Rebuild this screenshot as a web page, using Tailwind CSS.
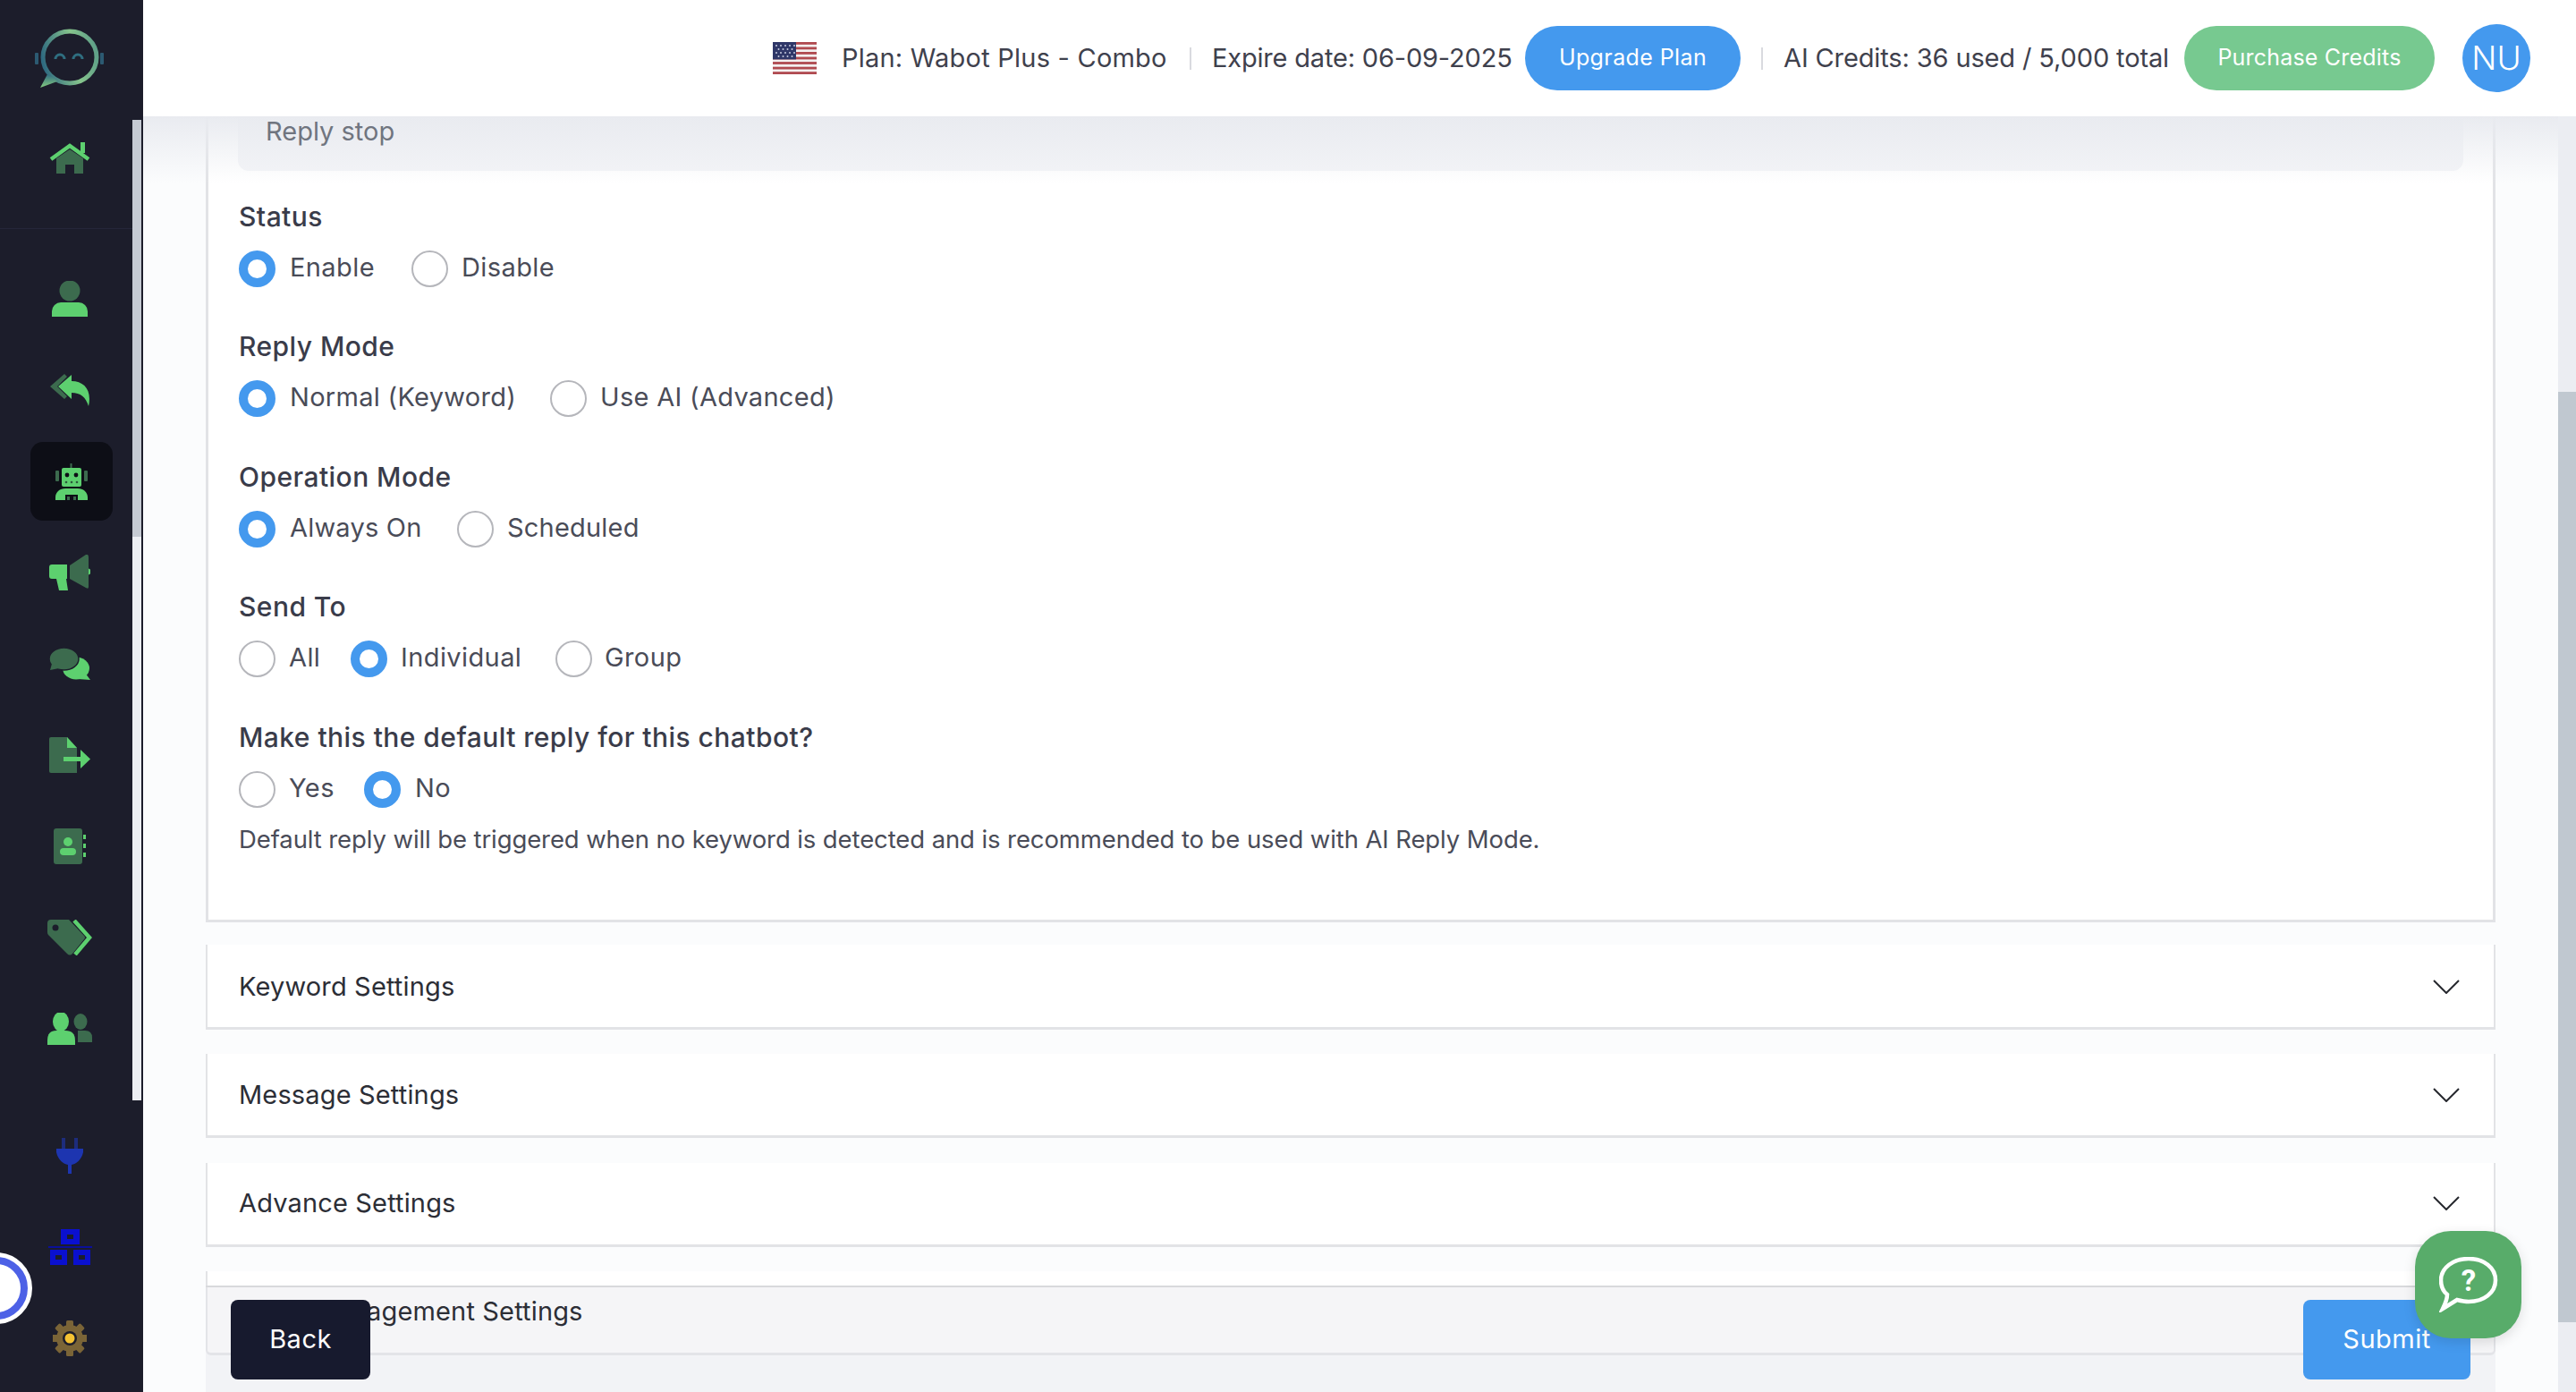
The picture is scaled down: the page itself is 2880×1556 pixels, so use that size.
<!DOCTYPE html>
<html lang="en">
<head>
  <meta charset="UTF-8">
  <title>Wabot - Reply</title>
  <script src="https://cdn.jsdelivr.net/npm/@tailwindcss/browser@4"></script>
</head>
<body class="font-['Inter',sans-serif] bg-[#fbfcfd] text-[#3a3c4a] overflow-hidden">
<div class="relative flex w-[2880px] h-[1556px] overflow-hidden">

  <!-- Sidebar -->
  <aside class="relative w-[160px] h-full shrink-0 bg-[#1c1d2b]">
    <div class="absolute left-[148px] top-[134px] w-[10px] h-[1096px] bg-[#eceef3]">
      <div class="w-full h-[466px] bg-[#c5cad3]"></div>
    </div>
    <div class="w-[148px] h-[130px] flex items-center justify-center pl-[8px]">
      <svg width="78" height="72" viewBox="41 30 78 72">
        <defs>
          <linearGradient id="logo" x1="0" y1=".6" x2="1" y2=".4">
            <stop offset="0" stop-color="#2f6a80"/><stop offset=".6" stop-color="#86c48c"/><stop offset="1" stop-color="#5fa088"/>
          </linearGradient>
          <linearGradient id="logo2" x1="0" y1="0" x2="0" y2="1">
            <stop offset="0" stop-color="#2f6a80"/><stop offset="1" stop-color="#86cc80"/>
          </linearGradient>
        </defs>
        <rect x="41" y="60" width="4" height="13" rx="1" fill="#2c5a72"/>
        <rect x="114" y="60" width="4" height="13" rx="1" fill="#2c5a72"/>
        <ellipse cx="80" cy="65" rx="30" ry="29" fill="none" stroke="url(#logo)" stroke-width="5"/>
        <path d="M55 84 L47 99 L66 92 L60 86Z" fill="url(#logo2)"/>
        <path d="M64 67 a5 5 0 0 1 10 0 M84 67 a5 5 0 0 1 10 0" fill="none" stroke="#2f6e80" stroke-width="3"/>
      </svg>
    </div>
    <div class="w-[148px] h-[126px] border-b border-[#25263a] pt-[29px] flex justify-center pl-[8px]">
      <svg width="46" height="35" viewBox="0 0 46 35">
        <path d="M8 18 L23 8 L38 18 V35 H28 V25 H18 V35 H8Z" fill="#3c6b4e"/>
        <rect x="35" y="0" width="5" height="12" fill="#5dd06f"/>
        <path d="M2 19 L23 4 L44 19" fill="none" stroke="#5dd06f" stroke-width="4.500"/>
      </svg>
    </div>
    <ul class="w-[148px] pt-[27px] pl-[8px]">
      <li class="h-[102px] flex items-center justify-center">
        <svg width="40" height="40" viewBox="0 0 40 40">
          <circle cx="20" cy="11" r="11.5" fill="#3c6b4e"/>
          <path d="M0 40 V34 A10 10 0 0 1 10 24 H30 A10 10 0 0 1 40 34 V40Z" fill="#5dd06f"/>
        </svg>
      </li>
      <li class="h-[102px] flex items-center justify-center">
        <svg width="45" height="36" viewBox="0 0 45 36">
          <path d="M0 14 L16 0 L19 3 L8 14 L19 25 L16 28Z" fill="#3c6b4e"/>
          <path d="M9 14 L24 1 V8 C38 8 47 18 43 36 C40 26 34 21 24 21 V28Z" fill="#5dd06f"/>
        </svg>
      </li>
      <li class="h-[102px] flex items-center justify-center">
        <div class="ml-[4px] w-[92px] h-[88px] rounded-[14px] bg-[#0d0e16] flex items-center justify-center">
          <svg width="37" height="41" viewBox="0 0 37 41">
            <rect x="16.5" y="0" width="2" height="6" fill="#3c6b4e"/>
            <rect x="0" y="8" width="4" height="12" rx="1" fill="#3c6b4e"/>
            <rect x="32" y="8" width="4" height="12" rx="1" fill="#3c6b4e"/>
            <rect x="7" y="5" width="22" height="21" rx="2" fill="#5dd06f"/>
            <circle cx="13" cy="13" r="2.4" fill="#0d0e16"/><circle cx="23" cy="13" r="2.4" fill="#0d0e16"/>
            <circle cx="12" cy="21" r="1.3" fill="#2c5a3c"/><circle cx="18" cy="21" r="1.3" fill="#2c5a3c"/><circle cx="24" cy="21" r="1.3" fill="#2c5a3c"/>
            <path d="M0 41 V38 C0 32 5 28 11 28 H25 C31 28 36 32 36 38 V41 H25 V35 H11 V41Z" fill="#5dd06f"/>
            <rect x="13" y="37" width="3" height="4" fill="#3c6b4e"/><rect x="20" y="37" width="3" height="4" fill="#3c6b4e"/>
          </svg>
        </div>
      </li>
      <li class="h-[102px] flex items-center justify-center">
        <svg width="46" height="41" viewBox="0 0 46 41">
          <path d="M3 11 H20 V27 H19 L21 40 H11 L8 27 H3 Q0 27 0 24 V14 Q0 11 3 11Z" fill="#5dd06f"/>
          <circle cx="43" cy="19" r="3.5" fill="#5dd06f"/>
          <path d="M23 12 L41 0 Q44 -1 44 3 V36 Q44 39 41 37 L23 27Z" fill="#3c6b4e"/>
        </svg>
      </li>
      <li class="h-[102px] flex items-center justify-center">
        <svg width="46" height="36" viewBox="0 0 46 36">
          <ellipse cx="30" cy="23" rx="15" ry="12.5" fill="#5dd06f"/>
          <path d="M40 28 L46 36 L32 35Z" fill="#5dd06f"/>
          <ellipse cx="16.500" cy="12.500" rx="16.500" ry="12.500" fill="#3c6b4e" stroke="#1c1d2b" stroke-width="1.500"/>
          <path d="M3 18 L1 25 L11 23Z" fill="#3c6b4e"/>
        </svg>
      </li>
      <li class="h-[102px] flex items-center justify-center">
        <svg width="46" height="40" viewBox="0 0 46 40">
          <path d="M2 0 H20 L31 12 V40 H2 Q0 40 0 38 V2 Q0 0 2 0Z" fill="#3c6b4e"/>
          <path d="M20 0 L31 12 H20Z" fill="#5dd06f"/>
          <rect x="16" y="22" width="22" height="5" fill="#5dd06f"/>
          <path d="M35 14 L46 24.500 L35 35Z" fill="#5dd06f"/>
        </svg>
      </li>
      <li class="h-[102px] flex items-center justify-center">
        <svg width="36" height="40" viewBox="0 0 36 40">
          <rect x="0" y="0" width="32" height="40" rx="3" fill="#3c6b4e"/>
          <rect x="33" y="7" width="3" height="5" fill="#5dd06f"/><rect x="33" y="17" width="3" height="5" fill="#5dd06f"/><rect x="33" y="27" width="3" height="5" fill="#5dd06f"/>
          <circle cx="16" cy="15" r="5" fill="#5dd06f"/>
          <rect x="7" y="22" width="18" height="8" rx="4" fill="#5dd06f"/>
        </svg>
      </li>
      <li class="h-[102px] flex items-center justify-center">
        <svg width="50" height="40" viewBox="0 0 50 40">
          <path d="M4 0 H24 L41 18 Q43 20 41 22 L28 38 Q25 41 22 38 L1 17 Q0 16 0 14 V4 Q0 0 4 0Z" fill="#3c6b4e"/>
          <circle cx="9" cy="9" r="3.500" fill="#1c1d2b"/>
          <path d="M30 1 L47 20 L31 39" fill="none" stroke="#5dd06f" stroke-width="4.500"/>
        </svg>
      </li>
      <li class="h-[102px] flex items-center justify-center">
        <svg width="50" height="36" viewBox="0 0 50 36">
          <ellipse cx="37" cy="10" rx="7.500" ry="9" fill="#3c6b4e"/>
          <path d="M34 33 V20 H42 Q50 20 50 28 V33Z" fill="#3c6b4e"/>
          <ellipse cx="15" cy="10" rx="9" ry="11" fill="#5dd06f"/>
          <path d="M0 36 V31 Q0 20 10 20 H20 Q31 20 31 31 V36Z" fill="#5dd06f"/>
        </svg>
      </li>
    </ul>
    <ul class="w-[148px] mt-[40px] pl-[8px]">
      <li class="h-[102px] flex items-center justify-center">
        <svg width="30" height="40" viewBox="0 0 30 40">
          <rect x="6" y="0" width="4" height="12" fill="#1d2c7c"/><rect x="20" y="0" width="4" height="12" fill="#1d2c7c"/>
          <path d="M0 12 H30 V16 C28 25 22 29 17 30 V40 H13 V30 C8 29 2 25 0 16Z" fill="#1d35b0"/>
        </svg>
      </li>
      <li class="h-[102px] flex items-center justify-center">
        <svg width="49" height="40" viewBox="0 0 49 40">
          <path fill-rule="evenodd" d="M14 0 H35 V17 H14Z M21 6 V11 H28 V6Z M2 23 H21 V40 H2Z M8 29 V34 H15 V29Z M28 23 H47 V40 H28Z M34 29 V34 H41 V29Z" fill="#0a10d0"/>
          <rect x="0" y="19" width="49" height="2" fill="#0a0f9a"/>
        </svg>
      </li>
      <li class="h-[102px] flex items-center justify-center">
        <svg width="38" height="40" viewBox="-19 -20 38 40">
          <circle r="15" fill="#7a6437"/>
          <rect x="-4" y="-20" width="8" height="40" rx="1.500" fill="#7a6437"/>
          <rect x="-4" y="-20" width="8" height="40" rx="1.500" fill="#7a6437" transform="rotate(45)"/>
          <rect x="-4" y="-20" width="8" height="40" rx="1.500" fill="#7a6437" transform="rotate(90)"/>
          <rect x="-4" y="-20" width="8" height="40" rx="1.500" fill="#7a6437" transform="rotate(135)"/>
          <circle r="8" fill="#1c1d2b"/>
          <circle r="5.500" fill="#f4c233"/>
        </svg>
      </li>
    </ul>
  </aside>

  <!-- Main -->
  <div class="relative flex-1 min-w-0 h-full flex flex-col">
    <header class="relative z-20 h-[130px] shrink-0 bg-white flex items-center justify-end pr-[51px] text-[29px] text-[#3f414d] whitespace-nowrap">
      <svg width="49" height="36" viewBox="0 0 49 36" class="shrink-0">
        <rect width="49" height="36" fill="#f4f0f0"/>
        <rect y="0" width="49" height="2.800" fill="#b04a50"/><rect y="5.500" width="49" height="2.800" fill="#b04a50"/><rect y="11" width="49" height="2.800" fill="#b04a50"/><rect y="16.600" width="49" height="2.800" fill="#b04a50"/><rect y="22.100" width="49" height="2.800" fill="#b04a50"/><rect y="27.700" width="49" height="2.800" fill="#b04a50"/><rect y="33.200" width="49" height="2.800" fill="#b04a50"/>
        <rect width="26" height="19.400" fill="#2f3768"/>
        <g fill="#c8cce0"><circle cx="4" cy="4" r="1"/><circle cx="9" cy="4" r="1"/><circle cx="14" cy="4" r="1"/><circle cx="19" cy="4" r="1"/><circle cx="24" cy="4" r="1"/><circle cx="6.500" cy="8" r="1"/><circle cx="11.500" cy="8" r="1"/><circle cx="16.500" cy="8" r="1"/><circle cx="21.500" cy="8" r="1"/><circle cx="4" cy="12" r="1"/><circle cx="9" cy="12" r="1"/><circle cx="14" cy="12" r="1"/><circle cx="19" cy="12" r="1"/><circle cx="24" cy="12" r="1"/><circle cx="6.500" cy="16" r="1"/><circle cx="11.500" cy="16" r="1"/><circle cx="16.500" cy="16" r="1"/><circle cx="21.500" cy="16" r="1"/></g>
      </svg>
      <span class="ml-[28px] w-[364px] tracking-[0.22px]">Plan: Wabot Plus - Combo</span>
      <span class="ml-[25px] w-[2px] h-[25px] bg-[#d9dadf]"></span>
      <span class="ml-[23px] w-[335px] tracking-[-0.18px]">Expire date: 06-09-2025</span>
      <button class="ml-[15px] w-[241px] h-[72px] rounded-[36px] bg-[#4499ee] text-white text-[25px] tracking-[0.4px]">Upgrade Plan</button>
      <span class="ml-[23px] w-[2px] h-[25px] bg-[#d9dadf]"></span>
      <span class="ml-[23px] w-[433px] tracking-[-0.13px]">AI Credits: 36 used / 5,000 total</span>
      <button class="ml-[15px] w-[280px] h-[72px] rounded-[36px] bg-[#77c990] text-white text-[25px] tracking-[0.2px]">Purchase Credits</button>
      <span class="ml-[31px] w-[76px] h-[76px] rounded-full bg-[#4499ee] text-white text-[37px] font-light flex items-center justify-center">NU</span>
    </header>

    <!-- header shadow -->
    <div class="absolute z-10 left-0 right-0 top-[130px] h-[75px] bg-gradient-to-b from-[#e9ebf0] to-transparent"></div>

    <main class="relative flex-1 min-h-0 overflow-hidden pl-[70px] pr-[90px]">
      <section class="bg-white border-x-[3px] border-b-[3px] border-[#e2e3e6] px-[33px] pb-[70px]">
        <div class="h-[61px] rounded-b-[12px] bg-[#f3f4f7] pl-[31px] text-[#70757f] text-[29px] leading-[34px]"><span class="relative z-20">Reply stop</span></div>

        <div class="mt-[29px] ml-[1px]">
          <div class="h-[44px] leading-[44px] text-[30px] font-medium tracking-[0.45px]">Status</div>
          <div class="mt-[16px] h-[41px] flex items-center text-[29px] text-[#4a4c58] tracking-[0.4px]">
            <span class="w-[41px] h-[41px] rounded-full border-[10px] border-[#4499ee] bg-white shrink-0"></span>
            <span class="ml-[16px] w-[136px] mb-[4px]">Enable</span>
            <span class="w-[41px] h-[41px] rounded-full border-2 border-[#b5b6bb] bg-white shrink-0"></span>
            <span class="ml-[15px] mb-[4px]">Disable</span>
          </div>
        </div>

        <div class="mt-[44px] ml-[1px]">
          <div class="h-[44px] leading-[44px] text-[30px] font-medium tracking-[0.45px]">Reply Mode</div>
          <div class="mt-[16px] h-[41px] flex items-center text-[29px] text-[#4a4c58] tracking-[0.3px]">
            <span class="w-[41px] h-[41px] rounded-full border-[10px] border-[#4499ee] bg-white shrink-0"></span>
            <span class="ml-[16px] w-[291px] mb-[4px]">Normal (Keyword)</span>
            <span class="w-[41px] h-[41px] rounded-full border-2 border-[#b5b6bb] bg-white shrink-0"></span>
            <span class="ml-[15px] mb-[4px]">Use AI (Advanced)</span>
          </div>
        </div>

        <div class="mt-[45px] ml-[1px]">
          <div class="h-[44px] leading-[44px] text-[30px] font-medium tracking-[0.45px]">Operation Mode</div>
          <div class="mt-[16px] h-[41px] flex items-center text-[29px] text-[#4a4c58] tracking-[0.2px]">
            <span class="w-[41px] h-[41px] rounded-full border-[10px] border-[#4499ee] bg-white shrink-0"></span>
            <span class="ml-[16px] w-[187px] mb-[4px]">Always On</span>
            <span class="w-[41px] h-[41px] rounded-full border-2 border-[#b5b6bb] bg-white shrink-0"></span>
            <span class="ml-[15px] mb-[4px]">Scheduled</span>
          </div>
        </div>

        <div class="mt-[44px] ml-[1px]">
          <div class="h-[44px] leading-[44px] text-[30px] font-medium tracking-[0.45px]">Send To</div>
          <div class="mt-[16px] h-[41px] flex items-center text-[29px] text-[#4a4c58] tracking-[0.4px]">
            <span class="w-[41px] h-[41px] rounded-full border-2 border-[#b5b6bb] bg-white shrink-0"></span>
            <span class="ml-[15px] w-[69px] mb-[4px]">All</span>
            <span class="w-[41px] h-[41px] rounded-full border-[10px] border-[#4499ee] bg-white shrink-0"></span>
            <span class="ml-[15px] w-[173px] mb-[4px]">Individual</span>
            <span class="w-[41px] h-[41px] rounded-full border-2 border-[#b5b6bb] bg-white shrink-0"></span>
            <span class="ml-[14px] mb-[4px]">Group</span>
          </div>
        </div>

        <div class="mt-[45px] ml-[1px]">
          <div class="h-[44px] leading-[44px] text-[30px] font-medium tracking-[0.45px]">Make this the default reply for this chatbot?</div>
          <div class="mt-[16px] h-[41px] flex items-center text-[29px] text-[#4a4c58] tracking-[0.4px]">
            <span class="w-[41px] h-[41px] rounded-full border-2 border-[#b5b6bb] bg-white shrink-0"></span>
            <span class="ml-[15px] w-[84px] mb-[4px]">Yes</span>
            <span class="w-[41px] h-[41px] rounded-full border-[10px] border-[#4499ee] bg-white shrink-0"></span>
            <span class="ml-[16px] mb-[4px]">No</span>
          </div>
          <p class="mt-[15px] h-[40px] leading-[40px] text-[27.5px] text-[#4a4c58] tracking-[-0.1px] whitespace-nowrap">Default reply will be triggered when no keyword is detected and is recommended to be used with AI Reply Mode.</p>
        </div>
      </section>

      <div class="mt-[25px] h-[95px] pt-[2px] bg-white border-x-2 border-b-[3px] border-[#e2e3e6] flex items-center justify-between pl-[35px] pr-[38px] text-[29px] text-[#2c2e36] tracking-[0.15px]">
        <span>Keyword Settings</span>
        <svg width="30" height="16" viewBox="0 0 30 16" fill="none" stroke="#26282e" stroke-width="2"><path d="M1 1 L15 15 L29 1"/></svg>
      </div>
      <div class="mt-[27.3px] h-[94px] bg-white border-x-2 border-b-[3px] border-[#e2e3e6] flex items-center justify-between pl-[35px] pr-[38px] text-[29px] text-[#2c2e36] tracking-[0.15px]">
        <span>Message Settings</span>
        <svg width="30" height="16" viewBox="0 0 30 16" fill="none" stroke="#26282e" stroke-width="2"><path d="M1 1 L15 15 L29 1"/></svg>
      </div>
      <div class="mt-[27.3px] h-[94px] bg-white border-x-2 border-b-[3px] border-[#e2e3e6] flex items-center justify-between pl-[35px] pr-[38px] text-[29px] text-[#2c2e36] tracking-[0.15px]">
        <span>Advance Settings</span>
        <svg width="30" height="16" viewBox="0 0 30 16" fill="none" stroke="#26282e" stroke-width="2"><path d="M1 1 L15 15 L29 1"/></svg>
      </div>
      <div class="mt-[27.3px] h-[94px] bg-white border-x-2 border-b-[3px] border-[#e2e3e6] rounded-b-[6px] flex items-center pl-[45px] text-[29px] text-[#2c2e36] tracking-[0.15px]">
        <span class="relative z-20 mb-[2px]">Chat Management Settings</span>
      </div>
    </main>

    <!-- sticky footer: tint under the card text, buttons above it -->
    <div class="absolute z-10 left-[70px] w-[2560px] top-[1437px] h-[119px] border-t-2 border-[#d8d9dc] bg-[#e5e7eb]/40"></div>
    <div class="absolute z-[25] left-[70px] w-[2560px] top-[1453px] flex justify-between px-[28px]">
      <button class="w-[156px] h-[89px] pb-[2px] rounded-[8px] bg-[#171a2e] text-white text-[29px] tracking-[0.5px]">Back</button>
      <button class="w-[187px] h-[89px] pb-[2px] rounded-[8px] bg-[#4499ee] text-white text-[29px] tracking-[0.5px]">Submit</button>
    </div>

    <!-- help button -->
    <button class="absolute z-30 left-[2540px] top-[1376px] w-[119px] h-[120px] rounded-[40px] bg-[#58ac6a] shadow-[0_4px_14px_rgba(0,0,0,.12)] flex items-center justify-center">
      <svg width="66" height="62" viewBox="0 0 66 62" fill="none">
        <path d="M33 2 C50 2 63 12 63 26 C63 40 50 50 33 50 C28 50 24 49 20 48 L4 58 C7 52 9 47 9 42 C4 38 2 32 2 26 C2 12 16 2 33 2Z" stroke="#fff" stroke-width="4.500"/>
        <text x="33" y="38" text-anchor="middle" font-family="Roboto, sans-serif" font-weight="700" font-size="33" fill="#fff">?</text>
      </svg>
    </button>

    <!-- page scrollbar -->
    <div class="absolute z-10 right-0 top-[130px] w-[20px] h-[1426px] bg-[#ebedf2]">
      <div class="mt-[308px] w-full h-[1040px] bg-[#c0c8d0]"></div>
    </div>
  </div>

  <!-- floating widget, cut by the left edge -->
  <div class="absolute z-30 left-[-44px] top-[1400px] w-[80px] h-[80px] rounded-full border-[5px] border-white bg-white">
    <div class="w-full h-full rounded-full border-[8px] border-[#4d61e6] bg-white"></div>
  </div>
</div>
</body>
</html>
